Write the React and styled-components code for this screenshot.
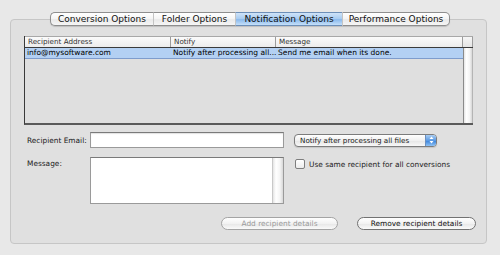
import styled, { createGlobalStyle } from 'styled-components';

const GlobalStyle = createGlobalStyle`
  html, body {
    margin: 0;
    padding: 0;
    background: #e8e8e8;
  }
  body {
    font-family: "Lucida Grande", "DejaVu Sans", sans-serif;
    color: #111;
  }
`;

const tabs = [
  { label: 'Conversion Options', w: 103 },
  { label: 'Folder Options', w: 82 },
  { label: 'Notification Options', w: 107 },
  { label: 'Performance Options', w: 108 },
];

// the Notify column is narrow, the list shows it cut short
const rows = [
  { address: 'info@mysoftware.com', notify: 'Notify after processing all...', message: 'Send me email when its done.' },
];

export default function App() {
  return (
    <Page>
      <GlobalStyle />
      <TabStrip>
        {tabs.map((t, i) => (
          <Tab key={t.label} w={t.w} active={i === 2} first={i === 0} last={i === tabs.length - 1}>
            {t.label}
          </Tab>
        ))}
      </TabStrip>
      <Panel>
        <Table>
          <HeaderRow>
            <HeadCell w={146}>Recipient Address</HeadCell>
            <HeadCell w={105}>Notify</HeadCell>
            <HeadCell w={187}>Message</HeadCell>
            <Corner />
          </HeaderRow>
          <Body>
            <Rows>
              {rows.map((r) => (
                <Row key={r.address} selected>
                  <Cell w={146}>{r.address}</Cell>
                  <Cell w={105}>{r.notify}</Cell>
                  <Cell w={187}>{r.message}</Cell>
                </Row>
              ))}
            </Rows>
            <Track />
          </Body>
        </Table>

        <Form>
          <Label>Recipient Email:</Label>
          <Input />
          <Select>
            <span>Notify after processing all files</span>
            <Stepper>
              <svg width="5" height="8" viewBox="0 0 5 8">
                <path d="M2.5 0.5 L4.5 3 L0.5 3 Z" fill="#fff" />
                <path d="M2.5 7.5 L4.5 5 L0.5 5 Z" fill="#fff" />
              </svg>
            </Stepper>
          </Select>

          <Label top>Message:</Label>
          <TextBox>
            <TextTrack />
          </TextBox>
          <CheckRow>
            <Box />
            <span>Use same recipient for all conversions</span>
          </CheckRow>
        </Form>

        <Buttons>
          <Button disabled>Add recipient details</Button>
          <Button>Remove recipient details</Button>
        </Buttons>
      </Panel>
    </Page>
  );
}

const Page = styled.div`
  width: 500px;
  height: 255px;
  padding: 12px 13px 0 10px;
  box-sizing: border-box;
  display: flex;
  flex-direction: column;
`;

const TabStrip = styled.div`
  display: flex;
  margin-left: 40px;
  margin-bottom: -7px;
  position: relative;
  z-index: 1;
  align-self: flex-start;
  box-shadow: 0 1px 1px rgba(0, 0, 0, 0.15);
  border-radius: 5px;
`;

const Tab = styled.div`
  width: ${({ w }) => w}px;
  height: 14px;
  box-sizing: border-box;
  font-size: 9px;
  line-height: 12px;
  text-align: center;
  white-space: nowrap;
  color: #111;
  border: 1px solid #8e8e8e;
  border-left: ${({ first }) => (first ? '1px solid #8e8e8e' : '1px solid #c4c4c4')};
  border-right: ${({ last }) => (last ? '1px solid #8e8e8e' : 'none')};
  border-radius: ${({ first, last }) => (first ? '5px 0 0 5px' : last ? '0 5px 5px 0' : '0')};
  background: ${({ active }) => (active
    ? 'linear-gradient(#cfe3f8 0%, #a6cbf1 50%, #8ab9ec 55%, #c5e0fa 100%)'
    : 'linear-gradient(#ffffff 0%, #f4f4f4 50%, #e9e9e9 55%, #f6f6f6 100%)')};
  ${({ active }) => active && 'border-top-color: #6d8fb8; border-bottom-color: #6d8fb8;'}
`;

const Panel = styled.div`
  height: 225px;
  box-sizing: border-box;
  border: 1px solid #c6c6c6;
  border-radius: 4px;
  background: #e0e0e0;
  padding: 16px 14px 0 13px;
  display: flex;
  flex-direction: column;
`;

const Table = styled.div`
  width: 449px;
  height: 89px;
  box-sizing: border-box;
  border-left: 1px solid #3a3a3a;
  border-bottom: 2px solid #5a5a5a;
  display: flex;
  flex-direction: column;
`;

const HeaderRow = styled.div`
  display: flex;
  height: 12px;
  box-sizing: border-box;
  border-top: 1px solid #a8a8a8;
  border-bottom: 1px solid #3a3a3a;
  background: linear-gradient(#fbfbfb, #ececec);
`;

const HeadCell = styled.div`
  width: ${({ w }) => w}px;
  box-sizing: border-box;
  border-right: 1px solid #9c9c9c;
  padding-left: 3px;
  font-size: 7.2px;
  line-height: 10px;
  color: #333;
  white-space: nowrap;
  overflow: hidden;
`;

const Corner = styled.div`
  flex: 1;
  border-right: 1px solid #9c9c9c;
  background: linear-gradient(#f6f6f6, #e4e4e4);
`;

const Body = styled.div`
  flex: 1;
  display: flex;
  min-height: 0;
`;

const Rows = styled.div`
  width: 438px;
  border-right: 1px solid #8a8a8a;
  background: #dfdfdf;
`;

const Row = styled.div`
  display: flex;
  height: 10px;
  background: ${({ selected }) => (selected ? '#b3d0f3' : 'transparent')};
  border-bottom: ${({ selected }) => (selected ? '1px solid #7e9ccc' : 'none')};
`;

const Cell = styled.div`
  width: ${({ w }) => w}px;
  box-sizing: border-box;
  padding-left: 2px;
  font-size: 7.5px;
  line-height: 10px;
  color: #000;
  white-space: nowrap;
`;

const Track = styled.div`
  flex: 1;
  border-right: 1px solid #b4b4b4;
  background: linear-gradient(90deg, #e4e4e4, #ffffff 30%, #f4f4f4 70%, #d6d6d6);
`;

const Form = styled.div`
  margin-top: 7px;
  display: grid;
  grid-template-columns: 63px 194px 1fr;
  row-gap: 9px;
  padding-left: 3px;
  font-size: 7.4px;
  color: #1a1a1a;
`;

const Label = styled.div`
  align-self: ${({ top }) => (top ? 'start' : 'center')};
  margin-top: ${({ top }) => (top ? '2px' : '0')};
  white-space: nowrap;
`;

const Input = styled.div`
  height: 16px;
  box-sizing: border-box;
  border: 1px solid #9a9a9a;
  border-top-color: #7a7a7a;
  background: #fff;
  box-shadow: inset 0 1px 1px rgba(0, 0, 0, 0.12);
`;

const Select = styled.div`
  align-self: center;
  margin-left: 10px;
  width: 143px;
  height: 13px;
  box-sizing: border-box;
  border: 1px solid #7c7c7c;
  border-radius: 4px;
  background: linear-gradient(#ffffff, #f0f0f0 50%, #e6e6e6 55%, #f8f8f8);
  display: flex;
  align-items: center;
  justify-content: space-between;
  padding-left: 5px;
  font-size: 7.2px;
  line-height: 11px;
  white-space: nowrap;
  overflow: hidden;
  box-shadow: 0 1px 1px rgba(0, 0, 0, 0.12);
`;

const Stepper = styled.div`
  width: 10px;
  height: 100%;
  display: flex;
  align-items: center;
  justify-content: center;
  background: linear-gradient(#a9cdf3, #5b9ae3 50%, #3f86dc 55%, #8fc2f4);
  border-left: 1px solid #6a8fc0;
`;

const TextBox = styled.div`
  height: 47px;
  box-sizing: border-box;
  border: 1px solid #9a9a9a;
  border-top-color: #7a7a7a;
  background: #fff;
  display: flex;
  justify-content: flex-end;
`;

const TextTrack = styled.div`
  width: 10px;
  border-left: 1px solid #c8c8c8;
  background: linear-gradient(90deg, #e4e4e4, #ffffff 30%, #f4f4f4 70%, #d8d8d8);
`;

const CheckRow = styled.div`
  display: flex;
  align-items: center;
  gap: 4px;
  margin: 2px 0 0 11px;
  align-self: start;
  white-space: nowrap;
`;

const Box = styled.div`
  width: 10px;
  height: 10px;
  box-sizing: border-box;
  border: 1px solid #7e7e7e;
  border-radius: 2px;
  background: linear-gradient(#ffffff, #ececec);
`;

const Buttons = styled.div`
  margin-top: 13px;
  display: flex;
  justify-content: flex-end;
  gap: 19px;
  margin-right: -4px;
`;

const Button = styled.div`
  width: ${({ disabled }) => (disabled ? '117px' : '119px')};
  height: 13px;
  box-sizing: border-box;
  border: 1px solid ${({ disabled }) => (disabled ? '#a4a4a4' : '#727272')};
  border-radius: 7px;
  background: linear-gradient(#ffffff, #f2f2f2 50%, #e8e8e8 55%, #fafafa);
  color: ${({ disabled }) => (disabled ? '#9a9a9a' : '#111')};
  font-size: 7.4px;
  line-height: 11px;
  text-align: center;
  white-space: nowrap;
`;
